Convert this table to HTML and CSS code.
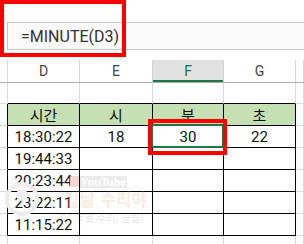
FILE: index.html
```html
<!DOCTYPE html>
<html lang="ko">
<head>
  <meta charset="UTF-8">
  <title>MINUTE 함수</title>
  <link rel="stylesheet" href="styles.css">
</head>
<body>
  <div class="sheet">
    <div class="top-space"></div>
    <div class="formula-bar"><span class="formula">=MINUTE(D3)</span></div>
    <div class="gap"></div>

    <div class="grid">
      <!-- column headers -->
      <div class="rh head"></div>
      <div class="ch">D</div>
      <div class="ch">E</div>
      <div class="ch sel">F</div>
      <div class="ch">G</div>
      <div class="ch rest"></div>

      <!-- empty row above the table -->
      <div class="rh"></div>
      <div class="c above"></div>
      <div class="c above"></div>
      <div class="c above"></div>
      <div class="c above"></div>
      <div class="c"></div>

      <!-- table header -->
      <div class="rh edge"></div>
      <div class="c t th">시간</div>
      <div class="c t th">시</div>
      <div class="c t th">분</div>
      <div class="c t th">초</div>
      <div class="c"></div>

      <div class="rh edge"></div>
      <div class="c t">18:30:22</div>
      <div class="c t">18</div>
      <div class="c t active">30</div>
      <div class="c t">22</div>
      <div class="c"></div>

      <div class="rh edge"></div>
      <div class="c t">19:44:33</div>
      <div class="c t"></div>
      <div class="c t"></div>
      <div class="c t"></div>
      <div class="c"></div>

      <div class="rh edge"></div>
      <div class="c t">20:23:44</div>
      <div class="c t"></div>
      <div class="c t"></div>
      <div class="c t"></div>
      <div class="c"></div>

      <div class="rh edge"></div>
      <div class="c t">23:22:11</div>
      <div class="c t"></div>
      <div class="c t"></div>
      <div class="c t"></div>
      <div class="c"></div>

      <div class="rh edge"></div>
      <div class="c t">11:15:22</div>
      <div class="c t"></div>
      <div class="c t"></div>
      <div class="c t"></div>
      <div class="c"></div>

      <div class="rh"></div>
      <div class="c"></div>
      <div class="c"></div>
      <div class="c"></div>
      <div class="c"></div>
      <div class="c"></div>
    </div>

    <!-- channel watermark -->
    <div class="watermark">
      <svg class="wm-logo" width="36" height="46" viewBox="0 0 36 46">
        <circle cx="18" cy="24" r="15" fill="none" stroke="#ededed" stroke-width="4"/>
        <circle cx="18" cy="20" r="6" fill="#f0f0f0"/>
      </svg>
      <div class="wm-text">
        <div class="wm-yt"><span class="yt-icon"></span><span class="yt-word">YouTube</span></div>
        <div class="wm-name">컴날 수리야</div>
        <div class="wm-sub">(PC 무료 수리, 꿀팁)</div>
      </div>
    </div>

    <!-- callouts -->
    <div class="mark mark-formula"></div>
    <div class="mark mark-cell"></div>
  </div>
</body>
</html>
```

FILE: styles.css
```css
body {
  margin: 0;
  background: #fff;
  font-family: Roboto, "Noto Sans CJK KR", sans-serif;
  color: #222;
}
.sheet {
  position: relative;
  width: 304px;
  height: 244px;
  overflow: hidden;
}
.top-space {
  height: 22px;
}
.formula-bar {
  height: 28px;
  margin-left: 7px;
  border: 1px solid #c6c6c6;
  border-right: none;
  background: #fafafa;
  box-sizing: border-box;
  display: flex;
  align-items: center;
  padding-left: 13px;
}
.formula {
  font-size: 16px;
  color: #333;
}
.gap {
  height: 10px;
}

/* worksheet cells */
.grid {
  display: grid;
  grid-template-columns: 8px 72px 73px 71px 72px 1fr;
  grid-template-rows: 23px 21px repeat(7, 22px);
}
.grid > div {
  box-sizing: border-box;
  border-right: 1px solid #d9d9d9;
  border-bottom: 1px solid #d9d9d9;
  display: flex;
  align-items: center;
  justify-content: center;
  font-size: 15px;
}
.grid > .ch {
  border-right-color: #d4d4d4;
  border-bottom-color: #ababab;
  color: #444;
  font-size: 14px;
}
.grid > .rh.head {
  border-bottom-color: #ababab;
}
.grid > .ch.sel {
  background: #e1e1e1;
  color: #217346;
  box-shadow: inset 0 -2px 0 #217346;
}
.grid > .c.above {
  border-bottom-color: #000;
}
.grid > .rh.edge {
  border-right-color: #000;
}
.grid > .c.t {
  border-right-color: #000;
  border-bottom-color: #000;
  color: #111;
}
.grid > .c.th {
  background: #c6e0b4;
  font-size: 15px;
}
.grid > .c.active {
  position: relative;
}
.active::after {
  content: "";
  position: absolute;
  left: -2px;
  right: -1px;
  top: -2px;
  bottom: -1px;
  border: 2px solid #217346;
}

/* watermark */
.watermark {
  position: absolute;
  left: 4px;
  top: 175px;
  display: flex;
  gap: 20px;
  pointer-events: none;
}
.wm-text {
  display: flex;
  flex-direction: column;
}
.wm-yt {
  display: flex;
  align-items: center;
  gap: 1px;
  height: 13px;
  margin-left: 10px;
}
.yt-icon {
  width: 9px;
  height: 11px;
  border-radius: 2px;
  background: #f8d4d4;
}
.yt-word {
  font-family: "Liberation Sans", sans-serif;
  font-size: 11px;
  font-weight: bold;
  color: #fff;
  background: #ebebeb;
  padding: 0 1px;
  line-height: 12px;
}
.wm-name {
  font-family: "Noto Sans CJK KR", sans-serif;
  font-size: 17px;
  font-weight: 900;
  color: rgba(240, 170, 130, 0.22);
  line-height: 22px;
  margin-left: 4px;
}
.wm-sub {
  font-family: "Noto Sans CJK KR", sans-serif;
  font-size: 10px;
  font-weight: bold;
  color: rgba(0, 0, 0, 0.09);
  margin-left: -4px;
}

/* red callout boxes */
.mark {
  position: absolute;
  border: 4px solid #f00;
  box-sizing: border-box;
}
.mark-formula {
  left: 0;
  top: 0;
  width: 126px;
  height: 57px;
}
.mark-cell {
  left: 148px;
  top: 119px;
  width: 79px;
  height: 36px;
}
```
